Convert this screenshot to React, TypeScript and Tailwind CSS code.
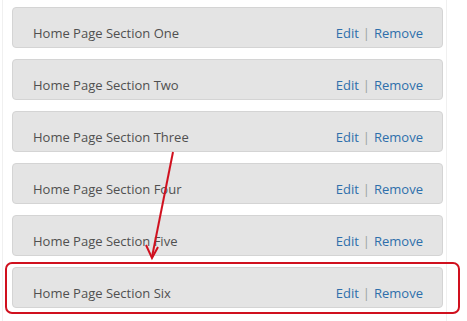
import React from "react";

const sections = ["One", "Two", "Three", "Four", "Five", "Six"];

export default function App() {
  return (
    <div
      className="relative w-[467px] h-[321px] bg-white overflow-hidden"
      style={{ fontFamily: '"Open Sans", "Liberation Sans", sans-serif' }}
    >
      <div className="ml-[2px] w-[445px] h-full border-x border-[#f0f0f0] pt-[7px] pl-[9px] pr-[3px] flex flex-col gap-[11px]">
        {sections.map((name) => (
          <div
            key={name}
            className="h-[41px] shrink-0 flex items-center justify-between pt-[12px] pl-[20px] pr-[19px] rounded-[4px] border border-[#d4d4d4] bg-[#e4e4e4] text-[13px]"
          >
            <span className="text-[#505050]">Home Page Section {name}</span>
            <span className="flex items-center gap-[4px]">
              <a className="text-[#2e6fab]">Edit</a>
              <span className="text-[#9aa39a]">|</span>
              <a className="text-[#2e6fab]">Remove</a>
            </span>
          </div>
        ))}
      </div>

      {/* annotation overlay */}
      <div className="absolute left-[5px] top-[262px] w-[455px] h-[52px] rounded-[7px] border-2 border-[#d0101e]" />
      <svg className="absolute left-0 top-0" width="467" height="321" viewBox="0 0 467 321">
        <line x1="173" y1="152" x2="152" y2="257" stroke="#d0101e" strokeWidth="2" />
        <polyline points="146,245 152,258 158,247" fill="none" stroke="#d0101e" strokeWidth="2" />
      </svg>
    </div>
  );
}
